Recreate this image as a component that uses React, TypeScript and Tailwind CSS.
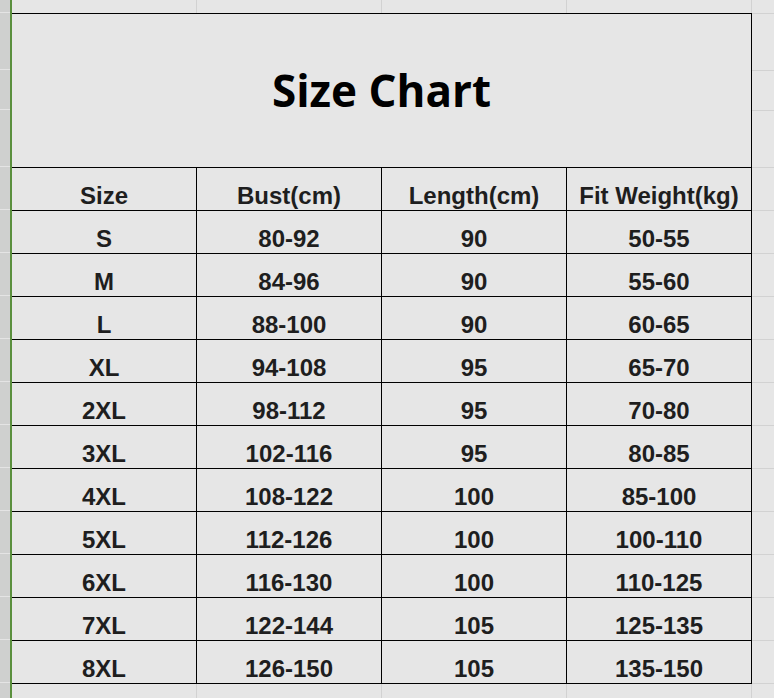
const rows = [
  ["S", "80-92", "90", "50-55"],
  ["M", "84-96", "90", "55-60"],
  ["L", "88-100", "90", "60-65"],
  ["XL", "94-108", "95", "65-70"],
  ["2XL", "98-112", "95", "70-80"],
  ["3XL", "102-116", "95", "80-85"],
  ["4XL", "108-122", "100", "85-100"],
  ["5XL", "112-126", "100", "100-110"],
  ["6XL", "116-130", "100", "110-125"],
  ["7XL", "122-144", "105", "125-135"],
  ["8XL", "126-150", "105", "135-150"],
];

const header = ["Size", "Bust(cm)", "Length(cm)", "Fit Weight(kg)"];

function Row({ cells }: { cells: string[] }) {
  return (
    <div className="flex h-[43px] border-b border-black">
      {cells.map((c, i) => (
        <div
          key={i}
          className="flex w-[185px] items-end justify-center border-r border-black pb-[2px] text-[24px] leading-none font-bold text-[#1e1e1e]"
        >
          {c}
        </div>
      ))}
    </div>
  );
}

// plain sheet row outside the table: light vertical gridlines only
function SheetRow({ className }: { className: string }) {
  return (
    <div className={`flex ${className}`}>
      <div className="w-[185px] border-r border-[#d2d2d2]" />
      <div className="w-[185px] border-r border-[#d2d2d2]" />
      <div className="w-[185px] border-r border-[#d2d2d2]" />
      <div className="w-[185px] border-r border-[#d2d2d2]" />
      <div className="flex-1" />
    </div>
  );
}

export default function App() {
  const rowLines = Array.from({ length: 11 });
  return (
    <div
      className="flex h-[698px] w-[774px] overflow-hidden bg-[#e6e6e6]"
      style={{ fontFamily: '"Liberation Sans", Arial, sans-serif' }}
    >
      {/* row headers strip */}
      <div className="flex w-[10px] flex-col bg-[#cfd0cf]">
        <div className="h-[13px] shrink-0 border-b border-[#e4e4e4]" />
        <div className="h-[57px] shrink-0 border-b border-[#e4e4e4]" />
        <div className="h-[40px] shrink-0 border-b border-[#e4e4e4]" />
        <div className="h-[57px] shrink-0 border-b border-[#e4e4e4]" />
        <div className="h-[43px] shrink-0 border-b border-[#e4e4e4]" />
        {rowLines.map((_, i) => (
          <div key={i} className="h-[43px] shrink-0 border-b border-[#e4e4e4]" />
        ))}
      </div>
      {/* selection edge */}
      <div className="w-[2px] bg-[#5a8f3d]" />

      <div className="flex flex-1 flex-col">
        <SheetRow className="h-[13px] shrink-0" />

        <div className="flex">
          {/* table */}
          <div className="w-[740px] border-t border-black">
            <div className="flex h-[154px] items-center justify-center border-r border-b border-black pb-[2px]">
              <h1
                className="text-[44px] font-bold text-black"
                style={{ fontFamily: '"Open Sans", sans-serif' }}
              >
                Size Chart
              </h1>
            </div>
            <Row cells={header} />
            {rows.map((r) => (
              <Row key={r[0]} cells={r} />
            ))}
          </div>

          {/* cells right of the table */}
          <div className="flex flex-1 flex-col border-t border-[#d2d2d2]">
            <div className="h-[57px] border-b border-[#d2d2d2]" />
            <div className="h-[40px] border-b border-[#d2d2d2]" />
            <div className="h-[57px] border-b border-[#d2d2d2]" />
            <div className="h-[43px] border-b border-[#d2d2d2]" />
            {rowLines.map((_, i) => (
              <div key={i} className="h-[43px] border-b border-[#d2d2d2]" />
            ))}
          </div>
        </div>

        <SheetRow className="flex-1" />
      </div>
    </div>
  );
}
